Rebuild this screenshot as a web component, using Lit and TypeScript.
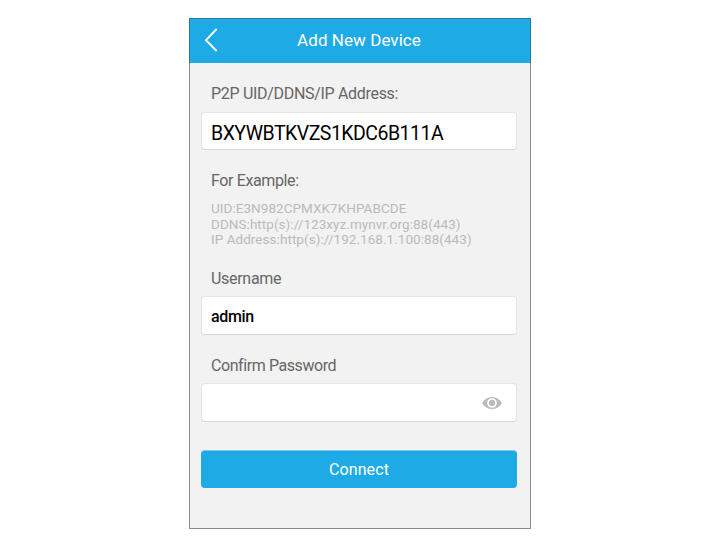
import { LitElement, html, css } from "lit";
import { customElement } from "lit/decorators.js";

@customElement("app-root")
export class AppRoot extends LitElement {
  static styles = css`
    :host { display: block; height: 543px; background: #fff; font-family: Roboto, "Noto Sans", sans-serif; overflow: hidden; }
    * { box-sizing: border-box; }
    .phone { width: 342px; height: 511px; margin: 18px 0 0 189px; background: #f2f2f2; border: 1px solid #8a8a8a; display: flex; flex-direction: column; }
    .bar { height: 45px; margin: -1px -1px 0; flex: none; background: #1eabe5; border: 1px solid #2a7798; border-bottom: 0; color: #fff; display: grid; grid-template-columns: 40px 1fr 42px; align-items: center; text-align: center; font-size: 17px; line-height: 20px; letter-spacing: 0.06px; }
    .bar svg { margin: 0 0 3px 14px; display: block; }
    .bar span { padding-bottom: 3px; }
    .body { padding: 0 13px 0 11px; display: flex; flex-direction: column; }
    .label { margin-left: 10px; color: #666; font-size: 16px; line-height: 20px; height: 20px; white-space: nowrap; }
    .l1 { margin-top: 21px; letter-spacing: -0.31px; }
    .field { height: 38px; background: #fff; border: 1px solid #e5e5e5; border-bottom-color: #d6d6d6; border-radius: 4px; display: flex; align-items: center; padding: 0 14px 0 9px; color: #000; font-size: 16px; white-space: nowrap; }
    .f1 { margin-top: 8px; padding-top: 4px; font-size: 19.5px; letter-spacing: -0.51px; }
    .l2 { margin-top: 21px; letter-spacing: -0.38px; }
    .hints { margin: 10px 0 0 10px; font-size: 13.5px; line-height: 15.5px; color: #bababa; white-space: nowrap; letter-spacing: 0.05px; }
    .l3 { margin-top: 21.5px; letter-spacing: -0.3px; }
    .f2 { margin-top: 7px; height: 39px; padding-top: 1px; font-weight: 500; letter-spacing: -0.35px; }
    .l4 { margin-top: 21px; letter-spacing: -0.42px; }
    .f3 { margin-top: 7px; height: 39px; justify-content: flex-end; }
    .btn { margin-top: 28px; height: 38px; padding: 0; border: 0; border-top: 1px solid #7fc4e6; border-radius: 4px; background: #1eabe5; color: #fff; font: 16px Roboto, sans-serif; letter-spacing: 0.1px; }
  `;
  render() {
    return html`
      <main class="phone">
        <header class="bar">
          <svg width="14" height="24" viewBox="0 0 14 24" fill="none" stroke="#fff" stroke-width="1.9"><path d="M12.6 1L2 12.2L12.6 23" /></svg>
          <span>Add New Device</span>
        </header>
        <section class="body">
          <div class="label l1">P2P UID/DDNS/IP Address:</div>
          <div class="field f1">BXYWBTKVZS1KDC6B111A</div>
          <div class="label l2">For Example:</div>
          <div class="hints">
            <div>UID:E3N982CPMXK7KHPABCDE</div>
            <div>DDNS:http(s)://123xyz.mynvr.org:88(443)</div>
            <div>IP Address:http(s)://192.168.1.100:88(443)</div>
          </div>
          <div class="label l3">Username</div>
          <div class="field f2">admin</div>
          <div class="label l4">Confirm Password</div>
          <div class="field f3">
            <svg width="20" height="12" viewBox="0 0 20 12"><path d="M0 6C4.5-2 15.5-2 20 6C15.5 14 4.5 14 0 6Z" fill="#bbb" /><circle cx="10" cy="6" r="4" fill="#bbb" stroke="#fff" stroke-width="1.7" /></svg>
          </div>
          <button class="btn">Connect</button>
        </section>
      </main>
    `;
  }
}
